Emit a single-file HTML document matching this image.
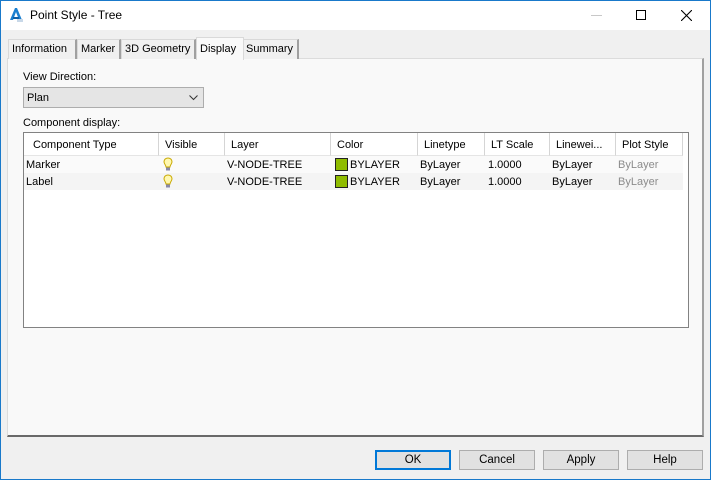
<!DOCTYPE html>
<html><head><meta charset="utf-8"><style>
*{margin:0;padding:0;box-sizing:border-box}
body{width:711px;height:480px;overflow:hidden;font-family:"Liberation Sans",sans-serif;font-size:11px;color:#000;position:relative;background:#f0f0f0;white-space:nowrap}
.a{position:absolute}
.win{left:0;top:0;width:711px;height:480px;border:1px solid #1979ca;background:#f0f0f0}
.title{left:1px;top:1px;width:709px;height:29px;background:#fff}
.tab{position:absolute;top:39px;height:20px;border:1px solid #d9d9d9;border-bottom:none;border-right:2px solid #a0a0a0;background:#f0f0f0;padding:3px 0 0 3px}
.panel{left:7px;top:58px;width:697px;height:379px;background:#f9f9f9;border:1px solid #dcdcdc;border-right:2px solid #a0a0a0;border-bottom:2px solid #696969}
.btn{position:absolute;top:450px;height:20px;width:76px;border:1px solid #adadad;background:#e1e1e1;text-align:center;line-height:18px;font-size:11.5px}
.th{position:absolute;top:133px;height:23px;line-height:25px;border-right:1px solid #d5d5d5;padding-left:6px;background:#fff;border-bottom:1px solid #e5e5e5;overflow:hidden}
.cell{position:absolute;line-height:17px;height:17px}
</style></head><body>
<div class="a win"></div>
<div class="a title"></div>
<svg class="a" style="left:9px;top:7px" width="14" height="16" viewBox="0 0 14 16"><path d="M1 13 L6 1 L8 1 L13 13 L10 13 L7 5 L4 13Z" fill="#1a7fd0"/><path d="M4 11 L10 11" stroke="#0c5fa8" stroke-width="2"/><rect x="8" y="12" width="6" height="3" fill="#c8d8e8"/></svg>
<div class="a" style="left:30px;top:8px;font-size:12px">Point Style - Tree</div>
<div class="a" style="left:591px;top:15px;width:11px;height:1px;background:#c8c8c8"></div>
<div class="a" style="left:636px;top:10px;width:10px;height:10px;border:1px solid #000"></div>
<svg class="a" style="left:681px;top:10px" width="11" height="11"><path d="M0 0L11 11M11 0L0 11" stroke="#000" stroke-width="1.1"/></svg>

<div class="a panel"></div>
<div class="tab" style="left:8px;width:69px">Information</div>
<div class="tab" style="left:77px;width:44px">Marker</div>
<div class="tab" style="left:121px;width:75px">3D Geometry</div>
<div class="tab" style="left:243px;width:56px;padding-left:2px">Summary</div>
<div class="tab" style="left:196px;top:37px;height:23px;width:48px;background:#f9f9f9;border-right:1px solid #d9d9d9;padding-top:5px;z-index:2">Display</div>

<div class="a" style="left:23px;top:71px">View Direction:</div>
<div class="a" style="left:23px;top:87px;width:181px;height:21px;background:#e5e5e5;border:1px solid #adadad;padding:4px 0 0 3px">Plan</div>
<svg class="a" style="left:189px;top:95px" width="9" height="6"><path d="M0.5 0.5L4.5 4.5L8.5 0.5" stroke="#333" fill="none"/></svg>

<div class="a" style="left:23px;top:117px">Component display:</div>
<div class="a" style="left:23px;top:132px;width:666px;height:196px;background:#fff;border:1px solid #828282"></div>
<div class="th" style="left:24px;width:135px;padding-left:9px">Component Type</div>
<div class="th" style="left:159px;width:66px">Visible</div>
<div class="th" style="left:225px;width:106px">Layer</div>
<div class="th" style="left:331px;width:87px">Color</div>
<div class="th" style="left:418px;width:67px">Linetype</div>
<div class="th" style="left:485px;width:65px">LT Scale</div>
<div class="th" style="left:550px;width:66px">Linewei...</div>
<div class="th" style="left:616px;width:67px">Plot Style</div>
<div class="a" style="left:24px;top:156px;width:659px;height:17px;background:#fafafa"></div>
<div class="a" style="left:24px;top:173px;width:659px;height:17px;background:#f4f4f4"></div>

<div class="cell" style="left:26px;top:157px">Marker</div>
<div class="cell" style="left:26px;top:174px">Label</div>
<svg class="a" style="left:163px;top:157px" width="10" height="15"><path d="M5 1C2.5 1 1 2.8 1 4.8C1 7 3 8 3 10L7 10C7 8 9 7 9 4.8C9 2.8 7.5 1 5 1Z" fill="#fff8b0" stroke="#c8a800"/><rect x="3" y="10.5" width="4" height="3" fill="#8888a8"/></svg>
<svg class="a" style="left:163px;top:174px" width="10" height="15"><path d="M5 1C2.5 1 1 2.8 1 4.8C1 7 3 8 3 10L7 10C7 8 9 7 9 4.8C9 2.8 7.5 1 5 1Z" fill="#fff8b0" stroke="#c8a800"/><rect x="3" y="10.5" width="4" height="3" fill="#8888a8"/></svg>
<div class="cell" style="left:227px;top:157px">V-NODE-TREE</div>
<div class="cell" style="left:227px;top:174px">V-NODE-TREE</div>
<div class="a" style="left:335px;top:158px;width:13px;height:13px;background:#8fbc00;border:1px solid #222"></div>
<div class="a" style="left:335px;top:175px;width:13px;height:13px;background:#8fbc00;border:1px solid #222"></div>
<div class="cell" style="left:350px;top:157px">BYLAYER</div>
<div class="cell" style="left:350px;top:174px">BYLAYER</div>
<div class="cell" style="left:420px;top:157px">ByLayer</div>
<div class="cell" style="left:420px;top:174px">ByLayer</div>
<div class="cell" style="left:488px;top:157px">1.0000</div>
<div class="cell" style="left:488px;top:174px">1.0000</div>
<div class="cell" style="left:552px;top:157px">ByLayer</div>
<div class="cell" style="left:552px;top:174px">ByLayer</div>
<div class="cell" style="left:618px;top:157px;color:#8c8c8c">ByLayer</div>
<div class="cell" style="left:618px;top:174px;color:#8c8c8c">ByLayer</div>

<div class="btn" style="left:375px;border:2px solid #0078d7;line-height:16px">OK</div>
<div class="btn" style="left:459px">Cancel</div>
<div class="btn" style="left:543px">Apply</div>
<div class="btn" style="left:627px">Help</div>
</body></html>
